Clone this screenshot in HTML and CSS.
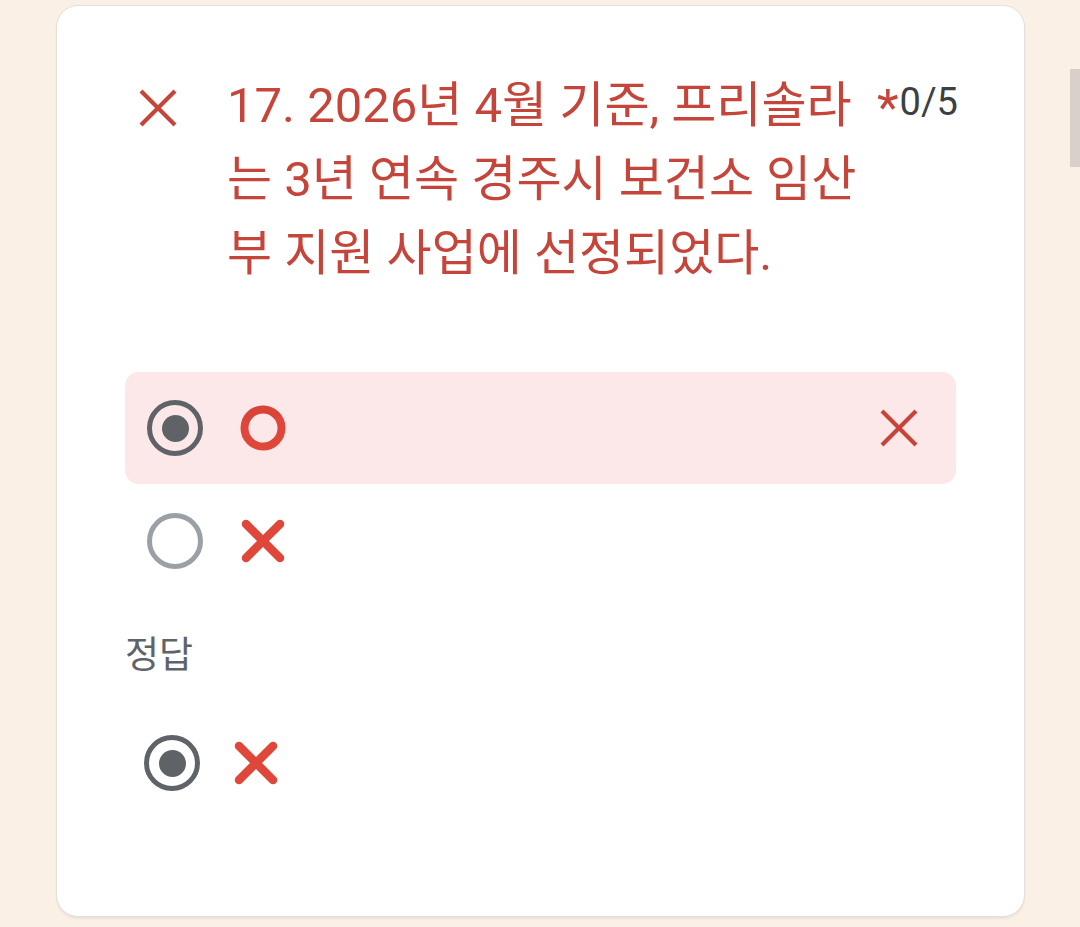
FILE: index.html
```html
<!DOCTYPE html>
<html lang="ko">
<head>
<meta charset="utf-8">
<link rel="stylesheet" href="styles.css">
</head>
<body>
<div class="page">
  <div class="card">
    <div class="header">
      <div class="head-icon">
        <svg width="40" height="40" viewBox="0 0 40 40"><path d="M3 3L37 37M37 3L3 37" stroke="#c5453a" stroke-width="4.2" fill="none"/></svg>
      </div>
      <div class="title">17. 2026년 4월 기준, 프리솔라<br>는 3년 연속 경주시 보건소 임산<br>부 지원 사업에 선정되었다.</div>
      <span class="req">*</span>
      <span class="score">0/5</span>
    </div>

    <div class="options">
      <div class="option wrong">
        <span class="radio checked"></span>
        <svg class="mark" width="48" height="48" viewBox="0 0 48 48"><circle cx="24" cy="24" r="18.5" fill="none" stroke="#e0473b" stroke-width="8"/><circle cx="24" cy="24" r="18.5" fill="none" stroke="#c9372c" stroke-width="8" stroke-opacity="0.25" stroke-dasharray="40 200" transform="rotate(200 24 24)"/></svg>
        <svg class="result" width="40" height="40" viewBox="0 0 40 40"><path d="M3 3L37 37M37 3L3 37" stroke="#c5453a" stroke-width="4.2" fill="none"/></svg>
      </div>
      <div class="option">
        <span class="radio"></span>
        <svg class="mark" width="48" height="48" viewBox="0 0 48 48"><path d="M7 7L41 41M41 7L7 41" stroke="#e0473b" stroke-width="8.5" stroke-linecap="round" fill="none"/></svg>
      </div>
    </div>

    <div class="answer-label">정답</div>
    <div class="option answer">
      <span class="radio checked"></span>
      <svg class="mark" width="48" height="48" viewBox="0 0 48 48"><path d="M7 7L41 41M41 7L7 41" stroke="#e0473b" stroke-width="8.5" stroke-linecap="round" fill="none"/></svg>
    </div>
  </div>
  <div class="scroll-thumb"></div>
</div>
</body>
</html>
```

FILE: styles.css
```css
* { box-sizing: border-box; }

html, body {
  margin: 0;
  padding: 0;
  background: #faf0e6;
  font-family: Roboto, "Noto Sans CJK KR", sans-serif;
}

.page {
  position: relative;
  width: 1080px;
  height: 927px;
  padding: 5px 0 0 56px;
}

.card {
  width: 969px;
  height: 912px;
  background: #fff;
  border: 1.5px solid #e3dfdb;
  border-radius: 22px;
  box-shadow: 0 2px 2px rgba(0,0,0,0.06);
  padding: 63px 68px 0 68px;
}

.header {
  display: flex;
  align-items: flex-start;
  padding-left: 13px;
}

.head-icon {
  width: 40px;
  height: 40px;
  margin-top: 19px;
  flex: none;
}
.head-icon svg { display: block; }

.title {
  width: 640px;
  margin-left: 49px;
  font-size: 49px;
  line-height: 74px;
  color: #c5453a;
  flex: none;
  white-space: nowrap;
}

.req {
  margin-left: 10px;
  font-size: 50px;
  line-height: 74px;
  color: #c5453a;
  margin-top: 2px;
}

.score {
  margin-left: 1px;
  font-size: 38px;
  line-height: 74px;
  color: #3c4043;
  margin-top: -4px;
}

.options {
  margin-top: 81px;
  display: flex;
  flex-direction: column;
  gap: 1px;
}

.option {
  height: 112px;
  display: flex;
  align-items: center;
  padding-left: 22px;
  padding-right: 37px;
  border-radius: 14px;
}

.option.wrong { background: #fce8e8; }

.radio {
  width: 56px;
  height: 56px;
  border-radius: 50%;
  border: 5px solid #9aa0a6;
  flex: none;
  display: flex;
  align-items: center;
  justify-content: center;
}

.radio.checked { border-color: #5f6368; }
.radio.checked::after {
  content: "";
  width: 27px;
  height: 27px;
  border-radius: 50%;
  background: #5f6368;
}

.mark {
  display: block;
  margin-left: 36px;
  flex: none;
}

.result {
  display: block;
  margin-left: auto;
}

.answer-label {
  margin-top: 34px;
  font-size: 37px;
  line-height: 50px;
  color: #5f6368;
}

.option.answer {
  margin-top: 26px;
  padding-left: 19px;
}
.option.answer .mark { margin-left: 32px; }

.scroll-thumb {
  position: absolute;
  right: 0;
  top: 69px;
  width: 10px;
  height: 98px;
  background: #d8d0c9;
}
```
